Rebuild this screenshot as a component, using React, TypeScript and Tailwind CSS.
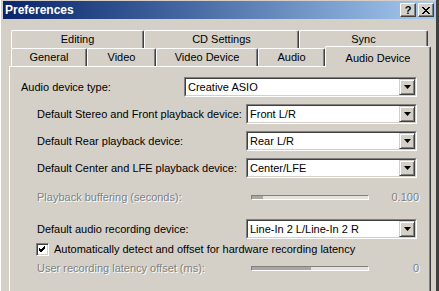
import React from "react";

function Tab({ label, w }: { label: string; w: string }) {
  return (
    <div
      className={`${w} h-[18px] flex items-center justify-center rounded-tl-[2px] rounded-tr-[2px] border-l border-t border-r border-l-white border-t-white border-r-[#404040] shadow-[inset_-1px_0_0_#808080]`}
    >
      {label}
    </div>
  );
}

function Combo({ value, w }: { value: string; w: string }) {
  return (
    <div className={`${w} h-[20px] flex border border-t-[#808080] border-l-[#808080] border-r-white border-b-white`}>
      <div className="flex-1 flex border border-t-[#404040] border-l-[#404040] border-r-[#d4d0c8] border-b-[#d4d0c8] bg-white">
        <span className="flex-1 pl-[2px] leading-[16px] text-black">{value}</span>
        <div className="w-[16px] h-[16px] flex items-center justify-center bg-[#d4d0c8] border border-t-[#d4d0c8] border-l-[#d4d0c8] border-r-[#404040] border-b-[#404040] shadow-[inset_1px_1px_0_#fff,inset_-1px_-1px_0_#808080]">
          <svg width="7" height="4" viewBox="0 0 7 4">
            <polygon points="0,0 7,0 3.5,4" fill="#000" />
          </svg>
        </div>
      </div>
    </div>
  );
}

function Slider({ fill }: { fill: string }) {
  return (
    <div className="w-[118px] h-[5px] flex border border-t-[#808080] border-l-[#808080] border-r-white border-b-white bg-[#e4e2dc]">
      <div className={`${fill} h-full bg-[#a8a6a0]`} />
    </div>
  );
}

const dim = "text-[#808080] [text-shadow:1px_1px_0_#fff]";

export default function App() {
  return (
    <div className="w-[439px] h-[291px] overflow-hidden bg-[#d4d0c8] text-[11px] text-black font-['Liberation_Sans',Arial,sans-serif] border-l border-l-white border-r-[3px] border-r-[#404040] shadow-[inset_1px_0_0_#d4d0c8] relative">
      {/* title bar */}
      <div className="ml-[2px] mt-[1px] h-[18px] flex items-center justify-between bg-gradient-to-r from-[#0a246a] to-[#a6caf0] pl-[2px] pr-[2px]">
        <span className="text-white font-bold text-[12px] leading-none">Preferences</span>
        <div className="flex gap-[2px]">
          <div className="w-[16px] h-[14px] flex items-center justify-center bg-[#d4d0c8] border border-t-white border-l-white border-r-[#404040] border-b-[#404040] shadow-[inset_-1px_-1px_0_#808080] font-bold text-[11px] leading-none">
            ?
          </div>
          <div className="w-[16px] h-[14px] flex items-center justify-center bg-[#d4d0c8] border border-t-white border-l-white border-r-[#404040] border-b-[#404040] shadow-[inset_-1px_-1px_0_#808080]">
            <svg width="8" height="7" viewBox="0 0 8 7">
              <path d="M0 0L7 7M1 0L8 7M7 0L0 7M8 0L1 7" stroke="#000" strokeWidth="1" />
            </svg>
          </div>
        </div>
      </div>

      {/* tabs */}
      <div className="pl-[10px] pt-[11px]">
        <div className="flex">
          <Tab label="Editing" w="w-[133px]" />
          <Tab label="CD Settings" w="w-[155px]" />
          <Tab label="Sync" w="w-[129px]" />
        </div>
        <div className="flex items-end h-[18px]">
          <Tab label="General" w="w-[76px]" />
          <Tab label="Video" w="w-[69px]" />
          <Tab label="Video Device" w="w-[102px]" />
          <Tab label="Audio" w="w-[67px]" />
          <div className="relative z-10 w-[106px] h-[21px] -mb-[1px] bg-[#d4d0c8] flex justify-center pt-[3px] rounded-tl-[2px] rounded-tr-[2px] border-l border-t border-r border-l-white border-t-white border-r-[#404040] shadow-[inset_-1px_0_0_#808080]">
            Audio Device
          </div>
        </div>
      </div>

      {/* panel */}
      <div className="ml-[8px] w-[422px] h-[240px] border-l border-t border-r border-l-white border-t-white border-r-[#404040] shadow-[inset_-1px_0_0_#808080] pt-[10px]">
        <div className="flex items-center h-[20px] pl-[11px]">
          <span className="w-[163px]">Audio device type:</span>
          <Combo value="Creative ASIO" w="w-[233px]" />
        </div>
        <div className="flex items-center h-[20px] pl-[27px] mt-[7px]">
          <span className="w-[209px]">Default Stereo and Front playback device:</span>
          <Combo value="Front L/R" w="w-[171px]" />
        </div>
        <div className="flex items-center h-[20px] pl-[27px] mt-[7px]">
          <span className="w-[209px]">Default Rear playback device:</span>
          <Combo value="Rear L/R" w="w-[171px]" />
        </div>
        <div className="flex items-center h-[20px] pl-[27px] mt-[7px]">
          <span className="w-[209px]">Default Center and LFE playback device:</span>
          <Combo value="Center/LFE" w="w-[171px]" />
        </div>
        <div className="flex items-center h-[20px] pl-[27px] mt-[9px]">
          <span className={`w-[214px] ${dim}`}>Playback buffering (seconds):</span>
          <Slider fill="w-[11px]" />
          <span className={`w-[50px] text-right ${dim}`}>0.100</span>
        </div>
        <div className="flex items-center h-[20px] pl-[27px] mt-[12px]">
          <span className="w-[209px]">Default audio recording device:</span>
          <Combo value="Line-In 2 L/Line-In 2 R" w="w-[171px]" />
        </div>
        <div className="flex items-center h-[16px] pl-[26px] mt-[2px]">
          <div className="w-[13px] h-[13px] flex items-center justify-center bg-white border border-t-[#808080] border-l-[#808080] border-r-white border-b-white shadow-[inset_1px_1px_0_#404040,inset_-1px_-1px_0_#d4d0c8]">
            <svg width="7" height="7" viewBox="0 0 7 7">
              <path d="M0 2L2 4L6 0M0 3L2 5L6 1M0 4L2 6L6 2" stroke="#000" strokeWidth="1" fill="none" />
            </svg>
          </div>
          <span className="ml-[5px]">Automatically detect and offset for hardware recording latency</span>
        </div>
        <div className="flex items-center h-[20px] pl-[27px] mt-[1px]">
          <span className={`w-[214px] ${dim}`}>User recording latency offset (ms):</span>
          <Slider fill="w-[59px]" />
          <span className={`w-[50px] text-right ${dim}`}>0</span>
        </div>
      </div>
    </div>
  );
}
